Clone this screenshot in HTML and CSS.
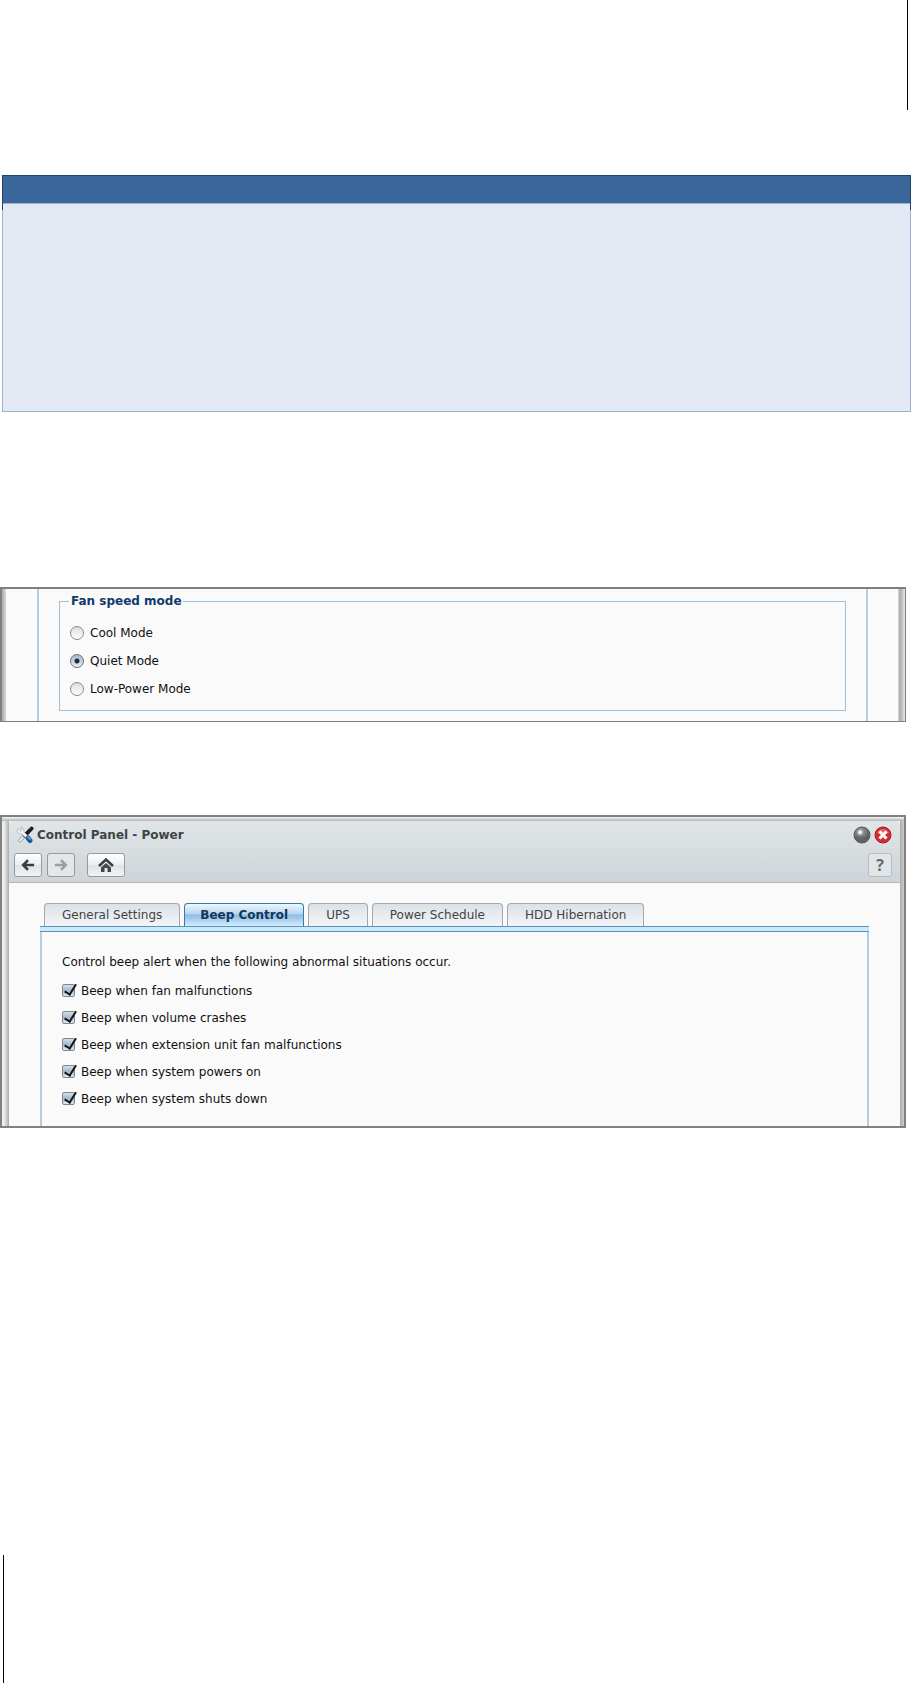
FILE: index.html
```html
<!DOCTYPE html>
<html lang="en">
<head>
<meta charset="utf-8">
<title>Control Panel - Power</title>
<link rel="stylesheet" href="styles.css">
</head>
<body>
<div class="page">
  <header class="rule rule-top"></header>

  <section class="note">
    <div class="note-head"></div>
    <div class="note-body"></div>
  </section>

  <section class="shot fan">
    <div class="fan-window">
      <form class="fan-pane">
        <fieldset class="fan-group">
          <legend>Fan speed mode</legend>
          <label class="option"><input type="radio" name="fan">Cool Mode</label>
          <label class="option"><input type="radio" name="fan" checked>Quiet Mode</label>
          <label class="option"><input type="radio" name="fan">Low-Power Mode</label>
        </fieldset>
      </form>
    </div>
  </section>

  <section class="shot power">
    <div class="window">
      <div class="window-head">
        <div class="titlebar">
          <svg class="logo" viewBox="0 0 18 18" aria-hidden="true">
            <path d="M4 14.500L9 9" stroke="#9b9fa3" stroke-width="3.500" stroke-linecap="round"/>
            <path d="M4 14.500L9 9" stroke="#e9ebec" stroke-width="2" stroke-linecap="round"/>
            <path d="M9 9.500L15.500 2.500" stroke="#191b1f" stroke-width="4" stroke-linecap="round"/>
            <path d="M13 3L15 1.500" stroke="#666b72" stroke-width="1"/>
            <path d="M2 2Q0 4.500 2 7Q3.500 8.500 6 8L10.500 12.500L12.500 10.500L8 6Q8.500 2 5 1L6 4L4.500 5.500Z" fill="#f6f7f8" stroke="#adb1b5" stroke-width=".8"/>
            <path d="M12 12L14 14.500" stroke="#1d559f" stroke-width="5" stroke-linecap="round"/>
            <path d="M12 11L14 13" stroke="#5c9be0" stroke-width="2" stroke-linecap="round"/>
          </svg>
          <h1>Control Panel - Power</h1>
          <button class="round" type="button" aria-label="Minimize">
            <svg viewBox="0 0 18 18"><defs><radialGradient id="ball" cx=".4" cy=".3"><stop offset="0" stop-color="#d5d7d9"/><stop offset=".45" stop-color="#888b8e"/><stop offset="1" stop-color="#65686b"/></radialGradient></defs><circle cx="9" cy="9" r="8" fill="url(#ball)" stroke="#55585b"/><path d="M2 9Q9 12 16 9A7 7 0 0 1 2 9" fill="#55585b" opacity=".4"/><circle cx="7" cy="6.500" r="2" fill="#fff" opacity=".8"/></svg>
          </button>
          <button class="round" type="button" aria-label="Close">
            <svg viewBox="0 0 18 18"><circle cx="9" cy="9" r="8" fill="#d02c32" stroke="#a91d24"/><path d="M3 7A6.500 6.500 0 0 1 15 7Q9 9 3 7" fill="#ed8b8b" opacity=".6"/><path d="M5.500 5.500L12.500 12.500M12.500 5.500L5.500 12.500" stroke="#fff" stroke-width="3"/></svg>
          </button>
        </div>
        <nav class="toolbar">
          <button class="tool" type="button" aria-label="Back"><svg viewBox="0 0 16 14"><path d="M15 7H3M8 1.500L2.500 7L8 12.500" fill="none" stroke="#3a3d41" stroke-width="3"/></svg></button>
          <button class="tool" type="button" aria-label="Forward" disabled><svg viewBox="0 0 16 14"><path d="M1 7H13M8 1.500L13.500 7L8 12.500" fill="none" stroke="#9b9ea1" stroke-width="3"/></svg></button>
          <button class="tool home" type="button" aria-label="Home"><svg viewBox="0 0 16 14"><path d="M1 8L8 1.500L15 8" fill="none" stroke="#3a3d41" stroke-width="2.500"/><path d="M3 9.500L8 5L13 9.500V14H9.500V10H6.500V14H3Z" fill="#45484c"/></svg></button>
          <button class="tool help" type="button">?</button>
        </nav>
      </div>
      <div class="window-body">
        <div class="tabs" role="tablist">
          <button class="tab" type="button" role="tab">General Settings</button>
          <button class="tab active" type="button" role="tab" aria-selected="true">Beep Control</button>
          <button class="tab" type="button" role="tab">UPS</button>
          <button class="tab" type="button" role="tab">Power Schedule</button>
          <button class="tab" type="button" role="tab">HDD Hibernation</button>
        </div>
        <form class="tab-panel">
          <p>Control beep alert when the following abnormal situations occur.</p>
          <label class="option"><input type="checkbox" checked>Beep when fan malfunctions</label>
          <label class="option"><input type="checkbox" checked>Beep when volume crashes</label>
          <label class="option"><input type="checkbox" checked>Beep when extension unit fan malfunctions</label>
          <label class="option"><input type="checkbox" checked>Beep when system powers on</label>
          <label class="option"><input type="checkbox" checked>Beep when system shuts down</label>
        </form>
      </div>
    </div>
  </section>

  <footer class="rule rule-bottom"></footer>
</div>
</body>
</html>
```
FILE: styles.css
```css
* { box-sizing: border-box; }
body {
  margin: 0;
  background: #fff;
  color: #111;
  font: 12px/18px "DejaVu Sans", Verdana, sans-serif;
}
.page { display: flex; flex-direction: column; min-height: 100vh; }
.rule-top { height: 110px; margin-right: 3px; border-right: 1px solid #000; }
.rule-bottom { height: 128px; margin-top: auto; margin-left: 3px; border-left: 1px solid #000; }

.note { margin: 65px 0 0 2px; }
.note-head {
  height: 35px;
  border: 1px solid #24455f;
  border-bottom: 0;
  background: linear-gradient(#3b6699 27px, #95b3d7 27px, #95b3d7 28px, #e3eaf4 28px);
}
.note-body { height: 202px; border: 1px solid #95b3d7; border-top: 0; background: #e3eaf4; }

.shot { margin-right: 5px; border: 2px solid #808080; background: #fafafa; }
.fan { margin-top: 175px; border-width: 2px 1px 1px 2px; }
.fan-window {
  padding: 0 37px 0 35px;
  background:
    linear-gradient(90deg, #aaa, #d8d8d8) left / 4px 100% no-repeat,
    linear-gradient(90deg, #d5dade, #aaa 30%, #e8e8e8) right / 7px 100% no-repeat;
}
.fan-pane {
  padding: 3px 20px 10px;
  border: solid #b0cfe5;
  border-width: 0 2px;
}
.fan-group { margin: 0; padding: 9px 11px 7px 10px; border: 1px solid #9bc0dc; min-width: 0; }
.fan-group legend { margin-left: -1px; padding: 0 1px 0 2px; color: #12396b; font-weight: bold; }
.option { display: flex; align-items: center; gap: 6px; height: 27px; }
.fan-group .option { height: 28px; }

input { appearance: none; width: 13px; height: 13px; margin: 0; flex: none; }
input[type="radio"] {
  width: 14px;
  height: 14px;
  border: 1px solid #888;
  border-radius: 50%;
  background: linear-gradient(#ddd, #fff);
}
input[type="radio"]:checked {
  border-color: #66717f;
  background: radial-gradient(circle, #222c38 0 2px, transparent 3px), linear-gradient(#a6b5c7, #e6eef5);
}
input[type="checkbox"] {
  position: relative;
  border: 1px solid #7b8794;
  border-radius: 2px;
  background: linear-gradient(#d5dfe9, #a7b9cb, #dfe8f0);
}
input[type="checkbox"]::after {
  content: "";
  position: absolute;
  left: 4px;
  top: -3px;
  width: 5px;
  height: 11px;
  border: solid #101418;
  border-width: 0 2px 2px 0;
  transform: rotate(32deg);
}

.power {
  margin-top: 93px;
  padding: 4px 4px 0 7px;
  background:
    linear-gradient(#f5f5f5, #b0b2b4) top / 100% 4px no-repeat,
    linear-gradient(90deg, #f5f5f5, #e4e4e4 40%, #a8aaac) left / 7px 100% no-repeat,
    linear-gradient(90deg, #a8aaac, #ccc) right / 4px 100% no-repeat;
}
.window { border-radius: 4px 4px 0 0; background: #fafafa; overflow: hidden; }
.window-head {
  padding: 5px 8px 5px 5px;
  border-bottom: 1px solid #b4b7b9;
  background: linear-gradient(#e0e5e8, #cfd4d8);
}
.titlebar { display: flex; align-items: center; height: 18px; gap: 3px; padding-left: 2px; }
.titlebar h1 { flex: 1; margin: 0; font-size: 12px; color: #3f4347; }
.logo { width: 18px; height: 18px; }
.round { width: 18px; height: 18px; padding: 0; border: 0; background: none; }
.round svg { display: block; width: 18px; height: 18px; }
.toolbar { display: flex; gap: 5px; margin-top: 9px; }
.tool {
  display: flex;
  align-items: center;
  justify-content: center;
  width: 28px;
  height: 24px;
  padding: 0;
  border: 1px solid #969a9e;
  border-radius: 3px;
  background: linear-gradient(#fff, #eceeef 50%, #dfe2e4 50%, #f2f3f4);
}
.tool:disabled { background: #e4e7e9; }
.tool svg { width: 14px; height: 14px; }
.home { width: 38px; margin-left: 7px; }
.home svg { width: 16px; }
.help {
  width: 24px;
  margin-left: auto;
  border-color: #b9bdc0;
  background: #e1e5e8;
  color: #66696c;
  font: bold 16px/20px "Open Sans", sans-serif;
}

.window-body { padding: 20px 31px 0; }
.tabs { display: flex; gap: 4px; padding-left: 4px; }
.tab {
  height: 23px;
  padding: 0 17px;
  border: 1px solid #a5a9ad;
  border-bottom: 0;
  border-radius: 4px 4px 0 0;
  background: linear-gradient(#dce1e6, #f2f6fa);
  color: #444;
  font: 12px/18px "DejaVu Sans", Verdana, sans-serif;
}
.tab.active {
  padding: 0 15px;
  border-color: #347bab;
  background: linear-gradient(#f0f7fd, #b6d6ef 45%, #8dbce2 50%, #d4ecff);
  color: #12365a;
  font-weight: bold;
}
.tab-panel { padding: 22px 20px 14px; border: solid #b0cfe5; border-width: 0 2px; position: relative; }
.tab-panel::before {
  content: "";
  position: absolute;
  inset: 0 -2px auto;
  height: 4px;
  border: solid #5c91b8;
  border-width: 1px 0;
  background: #cce8fa;
}
.tab-panel p { margin: 5px 0 6px; }
```
